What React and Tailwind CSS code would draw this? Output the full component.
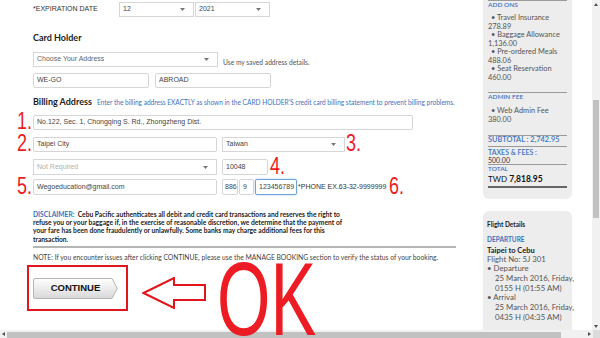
const ARIAL = "font-['Liberation_Sans',Arial,sans-serif]";

function Caret() {
  return (
    <svg width="5" height="3" viewBox="0 0 5 3" className="shrink-0">
      <path d="M0 0h5L2.5 3z" fill="#777" />
    </svg>
  );
}

function Select({ value, w, tone = "text-[#444]", className = "" }) {
  return (
    <div
      className={`${w} ${className} flex h-full shrink-0 items-center justify-between border border-[#d6d6d6] bg-white pl-[3px] pr-[8px] ${ARIAL} text-[7px] ${tone}`}
    >
      <span className="truncate">{value}</span>
      <Caret />
    </div>
  );
}

function Input({ value, w, className = "", focused = false }) {
  return (
    <div
      className={`${w} ${className} flex h-full shrink-0 items-center overflow-hidden rounded-[2px] border bg-white pl-[3px] ${ARIAL} text-[7px] text-[#444] ${
        focused ? "border-[#6fa3dc] shadow-[0_0_2px_#9cc3ee]" : "border-[#d6d6d6]"
      }`}
    >
      <span className="whitespace-nowrap">{value}</span>
    </div>
  );
}

function Num({ n, origin }) {
  return (
    <span className={`inline-block ${origin} scale-x-[0.75] ${ARIAL} text-[24px] leading-[19px] text-[#ed1c24]`}>
      {n}.
    </span>
  );
}

function Gutter({ n }) {
  return (
    <div className="flex h-full w-[33px] shrink-0 items-end justify-end pr-[1px]">
      {n && <Num n={n} origin="origin-right" />}
    </div>
  );
}

function Trail({ n, className = "" }) {
  return (
    <div className={`flex h-full items-end ${className}`}>
      <Num n={n} origin="origin-left" />
    </div>
  );
}

function ContinueButton() {
  return (
    <button className="relative flex h-[21px] w-[85px] items-center justify-center">
      <svg className="absolute inset-0" width="85" height="21" viewBox="0 0 85 21">
        <defs>
          <linearGradient id="btn" x1="0" y1="0" x2="0" y2="1">
            <stop offset="0" stopColor="#ffffff" />
            <stop offset="1" stopColor="#d8d8d8" />
          </linearGradient>
        </defs>
        <path
          d="M2 0.5H79L84.3 10.5L79 20.5H2Q0.5 20.5 0.5 19V2Q0.5 0.5 2 0.5Z"
          fill="url(#btn)"
          stroke="#b5b5b5"
        />
      </svg>
      <span className={`relative ${ARIAL} text-[9.5px] font-bold text-[#111]`}>CONTINUE</span>
    </button>
  );
}

function Sidebar() {
  return (
    <aside className="flex w-[89px] shrink-0 flex-col">
      <div className="h-[199px] rounded-b-[6px] bg-[#ededed] px-[5px] text-[7.4px] text-[#555]">
        <div className="h-px bg-[#9a9a9a]" />
        <div className="text-[6.5px] font-semibold leading-[8px] text-[#3b73c0]">ADD ONS</div>
        <div className="mt-[5px] whitespace-nowrap leading-[8.5px]">
          <div className="pl-[3px]">• Travel Insurance</div>
          <div>278.89</div>
          <div className="pl-[3px]">• Baggage Allowance</div>
          <div>1,136.00</div>
          <div className="pl-[3px]">• Pre-ordered Meals</div>
          <div>488.06</div>
          <div className="pl-[3px]">• Seat Reservation</div>
          <div>460.00</div>
        </div>
        <div className="mt-[10px] h-px bg-[#9a9a9a]" />
        <div className="text-[6.5px] font-semibold leading-[8px] text-[#3b73c0]">ADMIN FEE</div>
        <div className="mt-[6px] leading-[8.5px]">
          <div className="pl-[3px]">• Web Admin Fee</div>
          <div>380.00</div>
        </div>
        <div className="mt-[11px] h-px bg-[#9a9a9a]" />
        <div className="whitespace-nowrap text-[7.4px] font-semibold leading-[8px] text-[#3b73c0]">SUBTOTAL : 2,742.95</div>
        <div className="mt-[2px] h-px bg-[#9a9a9a]" />
        <div className="mt-[1px] text-[7px] font-semibold leading-[8px] text-[#3b73c0]">TAXES &amp; FEES :</div>
        <div className="text-[7px] leading-[8px] text-[#333]">500.00</div>
        <div className="h-px bg-[#9a9a9a]" />
        <div className="text-[6.5px] font-semibold leading-[8px] text-[#3b73c0]">TOTAL</div>
        <div className="whitespace-nowrap text-[8px] leading-[12px] text-[#111]">
          TWD <span className="text-[8.5px] font-bold">7,818.95</span>
        </div>
        <div className="mt-[1px] h-[1.5px] bg-[#666]" />
      </div>

      <div className="mt-[12px] flex-1 whitespace-nowrap rounded-t-[6px] bg-[#ededed] px-[4px] pt-[10px] text-[7.8px] text-[#555]">
        <div className="text-[6.5px] font-bold leading-[8px] text-[#222]">Flight Details</div>
        <div className="mt-[7px] text-[6.5px] font-bold leading-[8px] text-[#3b73c0]">DEPARTURE</div>
        <div className="mt-[1.5px] text-[7.5px] font-bold leading-[9px] text-[#222]">Taipei to Cebu</div>
        <div className="leading-[9.7px]">
          <div>Flight No: 5J 301</div>
          <div>• Departure</div>
          <div className="pl-[8px]">25 March 2016, Friday,</div>
          <div className="pl-[8px]">0155 H (01:55 AM)</div>
          <div>• Arrival</div>
          <div className="pl-[8px]">25 March 2016, Friday,</div>
          <div className="pl-[8px]">0435 H (04:35 AM)</div>
        </div>
      </div>
    </aside>
  );
}

function VScroll() {
  return (
    <div className="flex w-[8px] shrink-0 flex-col bg-[#f1f1f1]">
      <div className="flex h-[8px] items-center justify-center">
        <svg width="4" height="3" viewBox="0 0 4 3"><path d="M0 3h4L2 0z" fill="#505050" /></svg>
      </div>
      <div className="mx-[1px] mt-[92px] h-[118px] bg-[#c1c1c1]" />
      <div className="flex-1" />
      <div className="flex h-[8px] items-center justify-center">
        <svg width="4" height="3" viewBox="0 0 4 3"><path d="M0 0h4L2 3z" fill="#505050" /></svg>
      </div>
    </div>
  );
}

function HScroll() {
  return (
    <div className="flex h-[8px] shrink-0 bg-[#f1f1f1]">
      <div className="flex w-[7px] items-center justify-center">
        <svg width="3" height="4" viewBox="0 0 3 4"><path d="M3 0v4L0 2z" fill="#505050" /></svg>
      </div>
      <div className="mt-[2px] w-[554px] bg-[#c1c1c1]" />
      <div className="flex-1" />
      <div className="flex w-[8px] items-center justify-center">
        <svg width="3" height="4" viewBox="0 0 3 4"><path d="M0 0v4L3 2z" fill="#505050" /></svg>
      </div>
      <div className="w-[7px] bg-[#dcdcdc]" />
    </div>
  );
}

export default function App() {
  return (
    <div className="relative flex h-[338px] w-[600px] flex-col overflow-hidden bg-white font-['Lato',sans-serif] text-[#333]">
      <div className="flex min-h-0 flex-1">
        <main className="w-[483px] shrink-0">
          {/* Expiration */}
          <div className="mt-[2px] flex h-[15px]">
            <Gutter />
            <div className={`w-[86px] shrink-0 pt-[3px] ${ARIAL} text-[7px] leading-none text-[#333]`}>
              *EXPIRATION DATE
            </div>
            <Select w="w-[75px]" value="12" />
            <Select w="w-[75px]" value="2021" className="ml-[1px]" />
          </div>

          {/* Card holder */}
          <h3 className="mt-[15px] h-[12px] pl-[33px] text-[9px] font-bold leading-[12px] text-[#222]">Card Holder</h3>
          <div className="mt-[8px] flex h-[15px] pl-[33px]">
            <Select w="w-[185px]" value="Choose Your Address" tone="text-[#666]" />
            <span className="ml-[5px] self-end whitespace-nowrap text-[6.7px] leading-[10px] text-[#555]">
              Use my saved address details.
            </span>
          </div>
          <div className="mt-[6px] flex h-[15px] gap-[6px] pl-[33px]">
            <Input w="w-[116px]" value="WE-GO" />
            <Input w="w-[116px]" value="ABROAD" />
          </div>

          {/* Billing address */}
          <div className="mt-[8px] flex h-[12px] items-baseline whitespace-nowrap pl-[33px]">
            <span className="text-[9px] font-bold leading-[12px] text-[#222]">Billing Address</span>
            <span className="ml-[5px] text-[6.55px] text-[#3b73c0]">
              Enter the billing address EXACTLY as shown in the CARD HOLDER'S credit card billing statement to prevent billing problems.
            </span>
          </div>
          <div className="mt-[7px] flex h-[15px]">
            <Gutter n="1" />
            <Input w="w-[380px]" value="No.122, Sec. 1, Chongqing S. Rd., Zhongzheng Dist." />
          </div>
          <div className="mt-[7px] flex h-[15px]">
            <Gutter n="2" />
            <Input w="w-[184px]" value="Taipei City" />
            <Select w="w-[123px]" value="Taiwan" className="ml-[5px]" />
            <Trail n="3" className="ml-[1px]" />
          </div>
          <div className="mt-[7px] flex h-[16px]">
            <Gutter />
            <Select w="w-[184px]" value="Not Required" tone="text-[#b0b0b0]" />
            <Input w="w-[46px]" value="10048" className="ml-[5px]" />
            <Trail n="4" className="ml-[2px]" />
          </div>
          <div className="mt-[4px] flex h-[16px]">
            <Gutter n="5" />
            <Input w="w-[184px]" value="Wegoeducation@gmail.com" />
            <Input w="w-[16px]" value="886" className="ml-[5px] !pl-[2px]" />
            <Input w="w-[15px]" value="9" className="ml-[1px]" />
            <Input w="w-[42px]" value="123456789" className="ml-[1px]" focused />
            <span className={`ml-[1px] self-center whitespace-nowrap ${ARIAL} text-[7px] text-[#333]`}>
              *PHONE EX.63-32-9999999
            </span>
            <Trail n="6" className="ml-[3px]" />
          </div>

          {/* Disclaimer */}
          <p className="ml-[33px] mt-[15px] w-[318px] text-[6.7px] font-bold leading-[8.2px] text-[#222]">
            <span className="text-[#3b73c0]">DISCLAIMER:</span>&nbsp; Cebu Pacific authenticates all debit and credit card
            transactions and reserves the right to refuse you or your baggage if, in the exercise of reasonable discretion,
            we determine that the payment of your fare has been done fraudulently or unlawfully. Some banks may charge
            additional fees for this transaction.
          </p>
          <div className="ml-[33px] mt-[3px] w-[423px] border-t-2 border-[#b5b5b5]" />
          <p className="ml-[33px] mt-[5px] whitespace-nowrap text-[6.75px] leading-[8px] text-[#444]">
            NOTE: If you encounter issues after clicking CONTINUE, please use the MANAGE BOOKING section to verify the status of your booking.
          </p>

          {/* Continue + annotations */}
          <div className="mt-[4px] flex items-start pl-[27px]">
            <div className="h-[46px] w-[101px] shrink-0 border-2 border-[#e3151c] pl-[4px] pt-[11px]">
              <ContinueButton />
            </div>
            <svg className="ml-[14px] mt-[12px] shrink-0" width="64" height="32" viewBox="0 0 64 32">
              <path d="M1.5 16L32 1V8H63V23H32V31Z" fill="#fff" stroke="#e3151c" strokeWidth="2" />
            </svg>
            <span
              className={`relative z-10 -mt-[18px] ml-[11px] inline-block origin-left scale-x-[0.66] ${ARIAL} text-[104px] leading-none text-[#ed1c24]`}
            >
              OK
            </span>
          </div>
        </main>
        <Sidebar />
        <div className="w-[20px] shrink-0" />
        <VScroll />
      </div>
      <HScroll />
    </div>
  );
}
